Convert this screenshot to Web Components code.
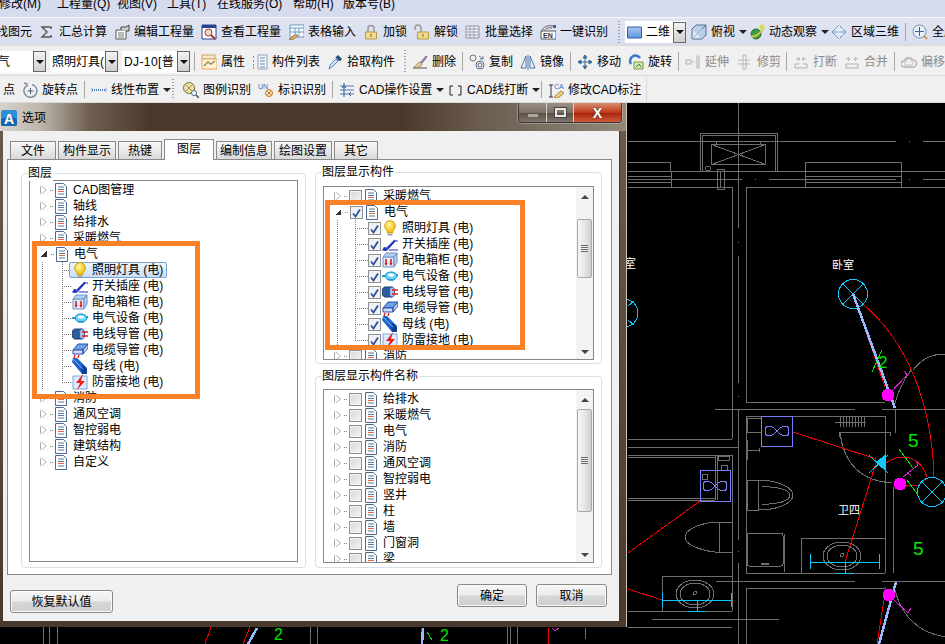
<!DOCTYPE html>
<html>
<head>
<meta charset="utf-8">
<title>选项</title>
<style>
  html, body { margin: 0; height: 100%; background: #000; overflow: hidden; }
  body { font: 12px/16px "Liberation Sans", "Noto Sans CJK SC", sans-serif; color: #000; }
</style>
</head>
<body>
<script>
const d = (s) => `fill="none" stroke="${s}"`;
const ICONS = {
  sigma: `<path d="M12 5V3H3l5 5-5 5h9v-2" ${d("#555")} stroke-width="1.4"/>`,
  edit: `<path d="M2 6h10v9H2z" fill="#fff" stroke="#555"/><path d="M4 9h6M4 11h6M4 13h6" stroke="#777"/><path d="M7 6V3h5l3-2v6h-3" fill="#ccc" stroke="#444"/>`,
  view: `<path d="M1 1h14v14H1z" fill="#fff" stroke="#27408b"/><path d="M1 1h14v3H1z" fill="#27408b"/><circle cx="7.500" cy="8.500" r="3.500" fill="#e8d8c8" stroke="#a33"/><path d="M10 11l4 4" stroke="#a33" stroke-width="2"/>`,
  table: `<path d="M2 1h14v12H2z" fill="#fff" stroke="#6b9bc9"/><path d="M2 4h14M7 4v9M11 4v9M2 8h14" stroke="#6b9bc9"/><path d="M1 15l7-5 2 2-6 4z" fill="#d9b070" stroke="#a57f40"/>`,
  lock: `<path d="M5 8V4.500a3 3 0 0 1 6 0V8" ${d("#999")} stroke-width="1.500"/><path d="M2.500 8h11v7h-11z" fill="#f2d98b" stroke="#b99a45"/><path d="M8 10v3" stroke="#86682a"/>`,
  unlock: `<path d="M1 6V4a3 3 0 0 1 6 0v4" ${d("#999")} stroke-width="1.500"/><path d="M3.500 8h11v7h-11z" fill="#f2d98b" stroke="#b99a45"/><path d="M9 10v3" stroke="#86682a"/>`,
  batch: `<path d="M1 2h13v12H1z" fill="#eef0f6" stroke="#8c93a8"/><path d="M1 5h13M1 8h13M1 11h13M5 2v12M9 2v12" stroke="#9aa0b4"/>`,
  en: `<path d="M1 7h15v8H1z" fill="#fff" stroke="#555"/><path d="M2 7a8 6 0 0 1 11-5" ${d("#666")}/><path d="M5 6a5 3 0 0 1 7-2" ${d("#666")}/><path d="M13 1h3v3h-3z" fill="#3a5fa8"/><text x="3" y="14" font-size="7" font-weight="700" font-family="Liberation Sans" fill="#333">EN</text>`,
  flat: `<defs><linearGradient id="fl" x1="0" y1="0" x2="0" y2="1"><stop offset="0" stop-color="#a9c8f2"/><stop offset="1" stop-color="#5f95e0"/></linearGradient></defs><path d="M.5 3h14v11H.5z" fill="url(#fl)" stroke="#2d5fae"/>`,
  cube: `<path d="M1 5h10v10H1z" fill="#dfeaf5" stroke="#4e6e93"/><path d="M1 5l4-4h10v10l-4 4M11 5l4-4" fill="#b9cfe6" stroke="#4e6e93"/><path d="M1 15l10-10" stroke="#9bb6d2"/>`,
  orbit: `<circle cx="7" cy="10" r="5" fill="#3f9a3f" stroke="#2a6b2a"/><path d="M2 12c4 2 10-3 13-9" ${d("#c7c94a")} stroke-width="2"/><circle cx="13" cy="3" r="2.500" fill="#d8dc5a"/>`,
  area: `<path d="M8 1l7 7-7 7-7-7z" fill="#cfe0f2" stroke="#6f93b8"/><path d="M4.500 4.500l7 7M11.500 4.500l-7 7M8 1v14" stroke="#fff"/><path d="M1 8h14" stroke="#8aa9c9"/>`,
  zoomall: `<circle cx="7.500" cy="7.500" r="6.500" fill="#e7eff8" stroke="#7d95ad"/><path d="M7.500 3v9M3 7.500h9" stroke="#35609a"/><path d="M12 12l3 3" stroke="#c99a45" stroke-width="2"/>`,
  attr: `<path d="M1 1h13v4H1z" fill="#f7ead0" stroke="#c9a267"/><path d="M1 5h15v10H1z" fill="#fdf2d8" stroke="#e6a75a"/><path d="M3 12l4-4 3 2 4-3" ${d("#9a8f5a")} stroke-width="1.500"/>`,
  list: `<path d="M1 3h2M1 7h2M1 11h2M1 14h2" ${d("#7a93b0")} stroke-width="2" stroke-dasharray="1 1"/><path d="M6 1h9v14H6z" fill="#f3f6fb" stroke="#8ca0b8"/><path d="M8 4h5M8 7h5M8 10h5M8 13h5" stroke="#6f86a6"/>`,
  pick: `<path d="M2 15l1-4 6-6 2 2-6 6z" fill="#cfe2f7" stroke="#5a85bd"/><path d="M9 3l4 4M11 1.500l3.500 3.500-2 2-3.500-3.500z" fill="#2c4a7a" stroke="#2c4a7a"/>`,
  erase: `<path d="M1 14h14" stroke="#888" stroke-width="1.500"/><path d="M2 13c3-1 3-4 6-5l2 2c-1 3-4 3-5 4z" fill="#e7c9a0" stroke="#a9825a"/><path d="M9 8l5-6 1 1-5 6z" fill="#b89ac6" stroke="#7d6290"/>`,
  copy: `<circle cx="4" cy="4" r="3" ${d("#777")}/><circle cx="11" cy="11" r="4" ${d("#5c6f8a")}/><circle cx="11" cy="11" r="2" ${d("#5c6f8a")}/><path d="M10 2l4 3M14 2v3h-3" ${d("#6b7d96")}/>`,
  mirror: `<path d="M1 14L6 2v12zM15 14L10 2v12z" fill="#eef3fb" stroke="#4e74a9"/><path d="M8 1v15" stroke="#4e74a9"/>`,
  move: `<path d="M8 1v14M1 8h14M8 1L6 4h4zM8 15l-2-3h4zM1 8l3-2v4zM15 8l-3-2v4z" fill="#3e6c9a" stroke="#3e6c9a"/>`,
  rotate: `<path d="M3 10A5 5 0 1 1 12 4" ${d("#3a79c9")} stroke-width="2.500"/><path d="M6 8h9v7H6z" fill="#cfe8b0" stroke="#7b9a4a"/><path d="M8 13l3-3 2 3" ${d("#3c8a3c")}/>`,
  extend: `<path d="M1 6h5v4H1zM12 2h2v12h-2z" ${d("#b0b0b0")}/><path d="M7 8h4" stroke="#b0b0b0" stroke-dasharray="1 1"/>`,
  trim: `<path d="M1 6h12M1 10h12M6 1h3v14H6z" ${d("#b8b8b8")}/>`,
  split: `<path d="M2 10h4M10 10h4M2 14h12M2 10v4M14 10v4" ${d("#b0b0b0")}/><path d="M3 5h4M9 5h4M5 3l2 2-2 2M11 3l-2 2 2 2" ${d("#b0b0b0")}/>`,
  join: `<path d="M2 10h12M2 14h12M2 10v4M14 10v4" ${d("#b0b0b0")}/><path d="M2 5h4M10 5h4M4 3l2 2-2 2M12 3l-2 2 2 2" ${d("#b0b0b0")}/>`,
  offset: `<path d="M3 13a3 3 0 0 1 0-6 5 5 0 0 1 9-1 3.500 3.500 0 0 1 0 7z" ${d("#b0b0b0")} stroke-width="1.300"/><path d="M5 11a1.500 1.500 0 0 1 0-3 3 3 0 0 1 6-.5 2 2 0 0 1 0 3.500z" ${d("#c4c4c4")}/>`,
  rotpt: `<path d="M4 4A6.500 6.500 0 1 0 10 2.500" ${d("#7a8ea8")} stroke-width="1.500"/><path d="M2 1l3 1v3" ${d("#7a8ea8")} stroke-width="1.500"/><path d="M8.500 6v6M5.500 9h6" stroke="#4a5a70"/>`,
  linear: `<path d="M1 8h14" stroke="#4f7fc2" stroke-width="2" stroke-dasharray="1 1"/><path d="M1 6v4M15 6v4" stroke="#7ca3d8"/>`,
  legend: `<circle cx="6" cy="6" r="5.500" fill="#f3e29a" stroke="#7a7458"/><path d="M2.500 2.500l7 7M9.500 2.500l-7 7" stroke="#8a8a70"/><circle cx="11" cy="11" r="2.500" fill="#fff" stroke="#4a6a8a"/><path d="M13 13l3 3" stroke="#4a4a4a" stroke-width="1.500"/>`,
  mark: `<text x="0" y="7" font-size="7" font-family="Liberation Sans" fill="#3a6fb5">UN</text><circle cx="11" cy="11" r="3.500" fill="#fbe6c4" stroke="#c9772a"/><path d="M9 9l4 4M13 9l-4 4" stroke="#c9772a"/>`,
  cadset: `<path d="M1 4h14M1 8h14M1 12h14" stroke="#4a78b8"/><path d="M5 1v14M3 6l2-2 2 2" ${d("#33558a")}/><path d="M12 10l-2 2 2 2" ${d("#33558a")}/>`,
  bracket: `<path d="M6 4H3v9h3M11 4h3v9h-3" ${d("#222")}/>`,
  cadmod: `<path d="M3 3v12M1 3h4M1 15h4" ${d("#333")}/><text x="6" y="7" font-size="7" font-family="Liberation Sans" fill="#2f6fc0">CAD</text><path d="M6 15l7-6 3 2-6 5z" fill="#f0cf80" stroke="#a88a45"/>`,
  bulb: `<defs><radialGradient id="bu" cx=".4" cy=".35" r=".7"><stop offset="0" stop-color="#fff6a0"/><stop offset="1" stop-color="#f4b800"/></radialGradient></defs><path d="M8 .5a5.500 5.500 0 0 0-3 10v2h6v-2a5.500 5.500 0 0 0-3-10z" fill="url(#bu)" stroke="#d6a400"/><path d="M5.500 13.500h5v2h-5z" fill="#9a9a9a"/>`,
  switch: `<path d="M0 14h5l8-9h3M5 12l8-8M7 14h9" ${d("#2233bb")} stroke-width="1.200"/><circle cx="3" cy="13" r="2" fill="#2233bb"/>`,
  box: `<path d="M1 5h11v10H1z" fill="#dfeafa" stroke="#6f93c8"/><path d="M1 5l3-4h11l-3 4zM12 5l3-4v9l-3 5z" fill="#b7d0f2" stroke="#6f93c8"/><path d="M4 7v5M9 7v5" stroke="#d01818" stroke-width="1.500"/><path d="M2.500 11L4 14l1.500-3M7.500 11L9 14l1.500-3" fill="#d01818"/>`,
  device: `<path d="M0 8h4M12 7h4" stroke="#1aa3e0" stroke-width="2"/><ellipse cx="9" cy="8" rx="6" ry="4" fill="#6fd3f7" stroke="#0a87c9"/><ellipse cx="9" cy="7" rx="3" ry="1.500" fill="#fff"/><path d="M6 12h6" stroke="#0a87c9"/>`,
  conduit: `<path d="M3 3h7v10H3a3 5 0 0 1 0-10z" fill="#2d5d9f" stroke="#1e3f70"/><ellipse cx="10" cy="8" rx="2.500" ry="5" fill="#a9c6e8" stroke="#2d5d9f"/><path d="M10 6h6M10 10h6" stroke="#e01818" stroke-width="1.300"/>`,
  cable: `<path d="M1 8l5-6h10l-5 6z" fill="#6fa3e8" stroke="#2451a6"/><path d="M1 8h10v4H1zM11 8l5-6v4l-5 6z" fill="#cfe0f8" stroke="#2451a6"/><path d="M3 13l-1 3M7 13l-1 3" stroke="#e01818" stroke-width="1.300"/>`,
  bus: `<path d="M1 0h4l10 10v6h-5L0 4z" fill="#1e63c9"/><path d="M9 9l2-2 4 4v5h-5z" fill="#0c3f96"/><path d="M1 1l10 10" stroke="#7fb2f0"/>`,
  bolt: `<path d="M1 2h14v13H1z" fill="#dcebfb" stroke="#7fa8d8"/><path d="M11 0L4 9h4l-3 7 8-9H9z" fill="#ee1c1c"/>`
};
const svgIcon = (name, size = 16) =>
  `<svg width="${size}" height="${size}" viewBox="0 0 16 16" style="flex:none;display:block">${ICONS[name] || ""}</svg>`;

class MenuBar extends HTMLElement {
  connectedCallback() {
    const root = this.shadowRoot || this.attachShadow({ mode: "open" });
    root.innerHTML = `
      <style>
        :host { display: flex; flex: none; height: 17px; background: #d6dbee; border-bottom: 1px solid #f6f7fb; overflow: hidden; }
        div { display: flex; margin: 0 0 0 -1px; line-height: 9px; color: #000; }
        ::slotted(span) { flex: none; white-space: nowrap; }
      </style>
      <div><slot></slot></div>`;
  }
}
class ToolBar extends HTMLElement {
  connectedCallback() {
    const root = this.shadowRoot || this.attachShadow({ mode: "open" });
    const h = this.getAttribute("h") || 29;
    const pad = this.getAttribute("pad") || 0;
    root.innerHTML = `
      <style>
        :host { display: flex; flex: none; align-items: center; height: ${h}px; box-sizing: border-box; padding-top: ${pad}px;
                background: var(--bar, #f0f0f0); border-bottom: 1px solid #d9d9d9; overflow: hidden; }
      </style>
      <slot></slot>`;
  }
}
class TbBtn extends HTMLElement {
  connectedCallback() {
    const root = this.shadowRoot || this.attachShadow({ mode: "open" });
    const icon = this.getAttribute("icon");
    this.style.width = this.getAttribute("w") + "px";
    root.innerHTML = `
      <style>
        :host { display: flex; flex: none; align-items: center; gap: 4px; white-space: nowrap; color: #000; }
        :host([off]) { color: #8c8c8c; }
        .drop { width: 0; height: 0; margin-left: 0; border: 4px solid transparent; border-top: 4px solid #222; border-bottom: 0; }
      </style>
      ${icon ? svgIcon(icon) : ""}<slot></slot>${this.hasAttribute("drop") ? '<i class="drop"></i>' : ""}`;
  }
}
class TbSep extends HTMLElement {
  connectedCallback() {
    const root = this.shadowRoot || this.attachShadow({ mode: "open" });
    const w = this.getAttribute("w"), at = this.getAttribute("at");
    const grip = this.hasAttribute("grip");
    root.innerHTML = `
      <style>
        :host { display: block; flex: none; align-self: stretch; width: ${w}px; box-sizing: border-box; padding: ${grip ? "2px" : "4px"} 0 ${grip ? "2px" : "4px"} ${at}px; }
        i { display: block; height: 100%; width: 1px; background: #a6a6a6; }
        i.g { width: 2px; background: repeating-linear-gradient(to bottom, #9aa0ae 0 1px, transparent 1px 3px); }
      </style>
      <i class="${grip ? "g" : ""}"></i>`;
  }
}
class TbCombo extends HTMLElement {
  connectedCallback() {
    const root = this.shadowRoot || this.attachShadow({ mode: "open" });
    this.style.width = this.getAttribute("w") + "px";
    root.innerHTML = `
      <style>
        :host { display: flex; flex: none; height: 22px; background: #fff; align-items: center; white-space: nowrap; overflow: hidden; }
        .t { flex: 1; min-width: 0; overflow: hidden; display: flex; align-items: center; gap: 3px; padding-left: 2px; }
        .b { flex: none; box-sizing: border-box; width: 13px; height: 21px; border: 1px solid #666; background: linear-gradient(#f2f2f2, #cfcfcf); display: flex; align-items: center; justify-content: center; }
        .b i { width: 0; height: 0; border: 4px solid transparent; border-top: 4px solid #111; border-bottom: 0; }
      </style>
      <div class="t"><slot></slot></div><div class="b"><i></i></div>`;
  }
}
class CadCanvas extends HTMLElement {
  connectedCallback() {
    const root = this.shadowRoot || this.attachShadow({ mode: "open" });
    root.innerHTML = `
      <style>
        :host { display: block; flex: 1; min-height: 0; background: #000; overflow: hidden; }
        svg { display: block; }
        text { font-family: "Liberation Sans", "Noto Sans CJK SC", sans-serif; }
      </style>
      <svg width="945" height="541" viewBox="0 103 945 541" shape-rendering="crispEdges" fill="none">
        <path stroke="#6e6e6e" d="M738.500 103V228M738.500 242v1M738.500 256V383M738.500 396v1M738.500 410V540M738.500 551v1M738.500 563V644
          M628 141.500H896M909 141.500h1M923 141.500H945
          M700.500 171V133.500H777V171M702.500 171V135.500H775V171M711.500 144.500H765.500V164.500H711.500ZM711.500 144.500L765.500 164.500M765.500 144.500L711.500 164.500M716.500 144V141.500H760.500V144
          M628 171.500H945M628 176.500H672M628 179.500H742M755 179.500h1M769 179.500H896M909 179.500h1M923 179.500H945M628 182.500H672M805 176.500H902M805 182.500H902
          M628 162.500H670.500V171M671.500 171V187M628 187.500H732M746 187.500H945M805.500 187V162.500H901.500V187
          M717.500 169.500H724.500V189.500H717.500ZM720 172V187
          M732.500 187V439M628 439.500H732M628 447.500H738M746.500 187V402.500H885
          M715 409.500H855M882 409.500H945M746.500 416V573M746.500 416.500H885M885.500 416V573M893.500 487V573M895.500 409V433M746 573.500H885
          M716 581.500H855M882 581.500H945M746.500 588V644M746 588.500H885M885.500 588V600
          M732.500 455V611M628 455.500H732M628 457.500H715M628 500.500H715M628 498.500H715M715.500 456V500M717.500 456V500M718.500 456.500H729.500V460.500H718.500ZM721.500 465.500H727.500V470.500H721.500Z
          M715 522C696 524 685 531 685 537C685 544 698 550 715 552M719.500 522V552M715 522H732M715 552H732
          M747.500 480H758.500V510H747.500ZM758 480C778 480 793 488 793 495C793 503 778 510 758 510M762 487C776 486 790 490 790 495C790 501 776 505 762 504
          M749 533.500H781Q783 533.500 783 536V564Q783 566 781 566H749Q747 566 747 564V536Q747 533.500 749 533.500ZM784.500 534V572M761 563.500H769M761 564.500H769
          M801.500 538V573M801 538.500H885M662.500 576V611M662 576.500H732M628 611.500H732M652 619.500H779M628 627.500H732
          M839 432.500H890V436M839.500 432V437M747.500 418.500H761V432.500H747.500ZM747 440V460M747 450H759M759 448V452
          M840 417V427M843 417V427M846 417V427M849 417V427M852 417V427M855 417V427M858 417V427M861 417V427M864 417V427M835 422H866
          M43.500 627V644M49.500 627V644M57.500 627V644M310.500 627V644M317.500 627V644M507.500 627V644M510.500 627V644M517.500 627V644M585.500 628V639"/>
        <path stroke="#6e6e6e" d="M840 433Q846 480 892 483M911 370Q900 385 895 403M913 370Q925 354 945 354M895 590Q905 630 945 637"/>
        <circle cx="708" cy="168.500" r="2.500" stroke="#6e6e6e"/><circle cx="705" cy="477" r="3" stroke="#6e6e6e"/>
        <g stroke="#6e6e6e">
          <ellipse cx="842" cy="556" rx="19" ry="14"/><ellipse cx="842" cy="556" rx="15" ry="11"/><circle cx="842" cy="555" r="1.500"/>
          <ellipse cx="695" cy="594" rx="19" ry="14"/><ellipse cx="695" cy="594" rx="15" ry="11"/><circle cx="695" cy="593" r="1.500"/>
        </g>
        <path stroke="#7c7cff" d="M700.500 470.500H730.500V501.500H700.500ZM761.500 416.500H792.500V446.500H761.500Z"/>
        <path stroke="#7c7cff" d="M715 486C708 478 703 481 703 486C703 491 708 494 715 486C722 478 727 481 727 486C727 491 722 494 715 486M777 431C770 423 765 426 765 431C765 436 770 439 777 431C784 423 789 426 789 431C789 436 784 439 777 431"/>
        <path stroke="#ee0000" d="M628 553L700 501M793 432L876 459M876 463L845 562M628 589L662 600M853 294L885 387M886 587L877 644M864 305C905 340 932 400 934 477M886 463C905 450 922 460 927 477M900 485H917M211 627L205 644M250 627L243 644M421 628V644M548 628L549 644"/>
        <path stroke="#0fc8ff" d="M810 562.500H879M810.500 554V569M879.500 554V569M845.500 562V573M837 573.500H854M662 600.500H731M662.500 593V607M731.500 593V607M697.500 600V611M688 611.500H705"/>
        <path stroke="#0fc8ff" d="M869 455L888 473M869 473L888 455"/>
        <path fill="#0fc8ff" d="M886 454L876 462L886 471Z"/>
        <g stroke="#0fc8ff">
          <circle cx="853" cy="294" r="14.500"/><path d="M843 284L863 304M863 284L843 304"/>
          <circle cx="932" cy="492" r="14.500"/><path d="M922 482L942 502M942 482L922 502"/>
          <circle cx="624" cy="313" r="14"/><path d="M628 306L634 301M628 320L634 325"/>
        </g>
        <path stroke="#9bb9ff" stroke-width="2.500" d="M853 294L895 408M896 582L879 644M257 628L248 644M423 628L422 644"/>
        <g fill="#ff00ff"><circle cx="888" cy="395" r="6.500"/><circle cx="900" cy="484" r="6.500"/><circle cx="889" cy="595" r="6.500"/></g>
        <path stroke="#dd22dd" d="M890 393L907 375M903 477L918 465L916 461M907 472L911 476M894 600L908 613L911 608M904 371L908 376M552 628L555 631L559 628"/>
        <path stroke="#00e600" d="M872 372L882 350M899 449L913 468M907 480L918 495M427 632L432 640"/>
        <g fill="#00e600" shape-rendering="auto">
          <text x="883" y="368" font-size="16" text-anchor="middle">2</text>
          <text x="908" y="447" font-size="19">5</text><text x="913" y="555" font-size="19">5</text>
          <text x="274" y="640" font-size="16">2</text><text x="440" y="641" font-size="16">2</text>
        </g>
        <g fill="#fff" shape-rendering="auto">
          <text x="832" y="269" font-size="11">卧室</text>
          <text x="624" y="268" font-size="12">室</text>
          <text x="838" y="514" font-size="11">卫四</text>
        </g>
      </svg>`;
  }
}
class OptDialog extends HTMLElement {
  connectedCallback() {
    const root = this.shadowRoot || this.attachShadow({ mode: "open" });
    root.innerHTML = `
      <style>
        :host { position: absolute; left: 0; top: 103px; width: 627px; height: 524px; box-sizing: border-box; display: flex; flex-direction: column;
                background: linear-gradient(#6a5b4c, #4a3a2d 96%); border-right: 1px solid #cfc8bd; }
        .title { flex: none; height: 27px; display: flex; align-items: center; gap: 5px; padding: 1px 0 0 1px;
                 background: linear-gradient(90deg, #d6d4cd 0, #bdb7ad 40px, #6f5f50 90px, #4a392b 150px, #4a392b 400px, #6a5c4e 480px, #92897b 100%); }
        .title b { font-weight: normal; }
        .ctrl { position: absolute; right: 4px; top: 0; height: 19px; display: flex; border: 1px solid #3c3a38; border-top: 0; border-radius: 0 0 4px 4px; overflow: hidden; box-shadow: 0 0 0 1px #d8d4cc66; }
        .ctrl i { display: flex; align-items: center; justify-content: center; height: 100%; box-sizing: border-box; border-right: 1px solid #d8d4cc; background: linear-gradient(#9a9086, #7a7066 50%, #5a5046 55%, #80766c); }
        .min { width: 28px; } .min::after { content: ""; width: 10px; height: 3px; background: #aaa69f; margin-top: 5px; }
        .res { width: 27px; } .res::after { content: ""; width: 7px; height: 5px; border: 2px solid #e8e8e8; box-shadow: 0 0 0 1px #444; }
        .ctrl i.cls { width: 47px; border: 0; color: #fff; font: 700 14px/1 "Liberation Sans", sans-serif; text-shadow: 0 0 2px #333; background: linear-gradient(#d99070, #c23a1c 50%, #a82610 55%, #d05a38); }
        .body { flex: none; height: 490px; margin: 0 6px 0 3px; background: #f0f0f0; border: 1px solid #3c3a38; border-width: 0 1px 0 0; display: flex; flex-direction: column; box-sizing: border-box; }
      </style>
      <div class="title">${this.appIcon()}<b>${this.getAttribute("caption")}</b></div>
      <div class="ctrl"><i class="min"></i><i class="res"></i><i class="cls">X</i></div>
      <div class="body"><slot></slot></div>`;
  }
  appIcon() {
    return `<svg width="16" height="16" viewBox="0 0 16 16" style="flex:none"><rect width="16" height="16" rx="2" fill="#2a8fd8"/><path d="M0 9Q8 5 16 9V14a2 2 0 0 1-2 2H2a2 2 0 0 1-2-2z" fill="#1566ad"/><text x="8" y="13.500" text-anchor="middle" font-size="14" font-weight="700" font-family="Liberation Sans" fill="#fff">A</text></svg>`;
  }
}
class TabStrip extends HTMLElement {
  connectedCallback() {
    const root = this.shadowRoot || this.attachShadow({ mode: "open" });
    root.innerHTML = `
      <style>
        :host { display: flex; flex: none; align-items: flex-end; height: 20px; margin: 8px 0 0 4px; padding-left: 3px; gap: 2px; position: relative; z-index: 1; }
      </style>
      <slot></slot>`;
  }
}
class OptTab extends HTMLElement {
  connectedCallback() {
    const root = this.shadowRoot || this.attachShadow({ mode: "open" });
    this.style.width = this.getAttribute("w") + "px";
    root.innerHTML = `
      <style>
        :host { display: flex; flex: none; box-sizing: border-box; height: 18px; align-items: center; justify-content: center; white-space: nowrap;
                border: 1px solid #8a8a8a; border-bottom: 0; background: linear-gradient(#f8f8f8, #e9e9e9 50%, #d8d8d8); }
        :host([active]) { height: 21px; margin-bottom: -1px; background: #fff; align-items: flex-start; padding-top: 1px; }
      </style>
      <slot></slot>`;
  }
}
class TabPane extends HTMLElement {
  connectedCallback() {
    const root = this.shadowRoot || this.attachShadow({ mode: "open" });
    root.innerHTML = `
      <style>
        :host { display: flex; flex: none; box-sizing: border-box; width: 605px; height: 416px; margin-left: 4px; padding: 13px 10px 6px 13px; gap: 9px; background: #fff; border: 1px solid #8a8a8a; }
      </style>
      <slot></slot>`;
  }
}
class GroupBox extends HTMLElement {
  connectedCallback() {
    const root = this.shadowRoot || this.attachShadow({ mode: "open" });
    this.style.width = this.getAttribute("w") + "px";
    this.style.height = this.getAttribute("h") + "px";
    root.innerHTML = `
      <style>
        :host { display: flex; flex: none; box-sizing: border-box; position: relative; border: 1px solid #d6e0e6; border-radius: 4px; padding: var(--pad); }
        .cap { position: absolute; left: 6px; top: -9px; background: #fff; padding: 0 1px 0 0; line-height: 16px; white-space: nowrap; }
      </style>
      <span class="cap">${this.getAttribute("caption")}</span><slot></slot>`;
  }
}
class GroupColumn extends HTMLElement {
  connectedCallback() {
    const root = this.shadowRoot || this.attachShadow({ mode: "open" });
    root.innerHTML = `
      <style>:host { display: flex; flex-direction: column; gap: 12px; flex: none; margin-top: -1px; }</style>
      <slot></slot>`;
  }
}
class ScrollBar extends HTMLElement {
  connectedCallback() {
    const root = this.shadowRoot || this.attachShadow({ mode: "open" });
    const top = +this.getAttribute("top"), h = +this.getAttribute("size");
    root.innerHTML = `
      <style>
        :host { display: flex; flex-direction: column; flex: none; width: 17px; background: #f3f3f3; }
        .a { flex: none; height: 17px; display: flex; align-items: center; justify-content: center; padding-top: 3px; box-sizing: border-box; }
        .a i { width: 0; height: 0; border: 4px solid transparent; }
        .up i { border-bottom: 4px solid #444; border-top: 0; }
        .dn i { border-top: 4px solid #444; border-bottom: 0; }
        .sp { flex: 1; }
        .th { flex: none; box-sizing: border-box; width: 15px; margin: ${top - 17}px 1px 0; height: ${h}px; border: 1px solid #a9a9a9; border-radius: 2px;
              background: linear-gradient(90deg, #f6f6f6, #e6e6e6 50%, #cfcfcf); display: flex; align-items: center; justify-content: center; }
        .th i { width: 7px; height: 7px; background: repeating-linear-gradient(to bottom, #666 0 1px, #f4f4f4 1px 2px); }
      </style>
      <div class="a up"><i></i></div><div class="th"><i></i></div><div class="sp"></div><div class="a dn"><i></i></div>`;
  }
}
class TreeView extends HTMLElement {
  connectedCallback() {
    const root = this.shadowRoot || this.attachShadow({ mode: "open" });
    const bar = this.hasAttribute("top")
      ? `<scroll-bar top="${this.getAttribute("top")}" size="${this.getAttribute("size")}"></scroll-bar>` : "";
    root.innerHTML = `
      <style>
        :host { display: flex; flex: 1; min-width: 0; box-sizing: border-box; border: 1px solid #85878f; background: #fff; overflow: hidden; }
        .rows { flex: 1; min-width: 0; padding-top: 1px; overflow: hidden; }
      </style>
      <div class="rows"><slot></slot></div>${bar}`;
  }
}
class TreeRow extends HTMLElement {
  connectedCallback() {
    const root = this.shadowRoot || this.attachShadow({ mode: "open" });
    const level = +this.getAttribute("level") || 0;
    const check = this.getAttribute("check");
    const open = this.hasAttribute("open");
    const box = check
      ? `<i class="chk ${check}">${check === "on" ? '<svg width="11" height="11" viewBox="0 0 11 11"><path d="M2 5.500l2.500 3L9 1.500" fill="none" stroke="#33509f" stroke-width="1.800"/></svg>' : ""}</i>`
      : "";
    const icon = this.getAttribute("icon") || "doc";
    const doc = `<svg class="doc" width="12" height="15" viewBox="0 0 12 15"><path d="M.5.500h8l3 3v11H.5z" fill="#fdfdfe" stroke="#4a6a94"/><path d="M3 4h6M3 6.500h6M3 11h6" stroke="#5c78a0"/><path d="M3 8.500h6" stroke="${icon === "doc2" ? "#5c78a0" : "#ea6a3a"}"/></svg>`;
    const head = level
      ? `<i class="lead ${this.hasAttribute("last") ? "last" : ""}"></i>${box}`
      : `<i class="pad"></i><i class="arr ${open ? "open" : ""}"></i><i class="conn"></i>${box}`;
    const body = level
      ? `<span class="item ${this.hasAttribute("selected") ? "sel" : ""}">${svgIcon(icon)}<span class="lbl"><slot></slot></span></span>`
      : `<span class="item top ${check ? "c" : ""}">${doc}<span class="lbl"><slot></slot></span></span>`;
    root.innerHTML = `
      <style>
        :host { display: flex; height: 16px; align-items: center; white-space: nowrap; }
        i { display: block; flex: none; }
        .pad { width: 11px; }
        .arr { width: 0; height: 0; border-left: 5px solid #fff; border-top: 4.500px solid transparent; border-bottom: 4.500px solid transparent; position: relative; filter: drop-shadow(-1px 0 0 #a6a6a6) drop-shadow(1px 0 0 #a6a6a6); margin: 0 1px 0 0; }
        .arr.open { width: 6px; height: 6px; border: 0; filter: none; background: linear-gradient(135deg, transparent 50%, #333 50%); }
        .conn { width: 8px; height: 1px; background: repeating-linear-gradient(90deg, transparent 0 3px, #888 3px 4px, transparent 4px 5px, #888 5px 6px, transparent 6px 8px); }
        .chk { box-sizing: border-box; width: 13px; height: 13px; border: 1px solid #8e8f8f; background: linear-gradient(135deg, #d8d8d8, #f4f4f4); box-shadow: inset 0 0 0 1px #f2f2f2; }
        .chk.on { background: #eef1f6; }
        .lead { width: var(--lead); height: 16px;
          background-image: repeating-linear-gradient(to bottom, #777 0 1px, transparent 1px 2px), repeating-linear-gradient(to bottom, #777 0 1px, transparent 1px 2px), repeating-linear-gradient(90deg, #777 0 1px, transparent 1px 2px);
          background-repeat: no-repeat;
          background-size: 1px 16px, 1px 16px, calc(var(--lead) - var(--g2)) 1px;
          background-position: var(--g1) 0, var(--g2) 0, var(--g2) 8px; }
        .lead.last { background-size: 1px 16px, 1px 8px, calc(var(--lead) - var(--g2)) 1px; }
        .item { display: flex; align-items: center; flex: none; gap: var(--icon-gap, 4px); height: 16px; margin-left: var(--item-ml, 0); }
        .item svg { flex: none; }
        .item.top { gap: 6px; margin-left: 0; }
        .item.top.c { margin-left: 3px; }
        .item.sel { box-sizing: border-box; height: 16px; margin-left: -3px; padding: 0 3px 0 2px; border: 1px solid #7da2ce; border-radius: 2px; background: linear-gradient(#edf5fd, #c9def5); }
      </style>
      ${head}${body}`;
  }
}
class PushBtn extends HTMLElement {
  connectedCallback() {
    const root = this.shadowRoot || this.attachShadow({ mode: "open" });
    this.style.width = this.getAttribute("w") + "px";
    root.innerHTML = `
      <style>
        :host { display: flex; flex: none; box-sizing: border-box; height: 23px; align-items: center; justify-content: center; border: 1px solid #8a8a8a; border-radius: 3px;
                background: linear-gradient(#f6f6f6, #ececec 48%, #d6d6d6 52%, #d0d0d0); box-shadow: inset 0 0 0 1px #fbfbfb; }
      </style>
      <slot></slot>`;
  }
}
class DlgFooter extends HTMLElement {
  connectedCallback() {
    const root = this.shadowRoot || this.attachShadow({ mode: "open" });
    root.innerHTML = `
      <style>
        :host { display: flex; flex: 1; align-items: flex-start; padding: 9px 12px 0 7px; gap: 9px; }
        .sp { flex: 1; }
      </style>
      <slot name="left"></slot><div class="sp"></div><slot></slot>`;
  }
}
class HiBox extends HTMLElement {
  connectedCallback() {
    const root = this.shadowRoot || this.attachShadow({ mode: "open" });
    root.innerHTML = `
      <style>
        :host { position: absolute; box-sizing: border-box; border: 5px solid #fb8127; pointer-events: none; z-index: 5; }
      </style>`;
  }
}
class AppShell extends HTMLElement {
  connectedCallback() {
    const root = this.shadowRoot || this.attachShadow({ mode: "open" });
    root.innerHTML = `
      <style>
        :host { display: flex; flex-direction: column; position: relative; width: 945px; height: 644px; overflow: hidden; background: #000; }
      </style>
      <slot></slot>`;
  }
}
customElements.define("menu-bar", MenuBar);
customElements.define("tool-bar", ToolBar);
customElements.define("tb-btn", TbBtn);
customElements.define("tb-sep", TbSep);
customElements.define("tb-combo", TbCombo);
customElements.define("cad-canvas", CadCanvas);
customElements.define("opt-dialog", OptDialog);
customElements.define("tab-strip", TabStrip);
customElements.define("opt-tab", OptTab);
customElements.define("tab-pane", TabPane);
customElements.define("group-box", GroupBox);
customElements.define("group-column", GroupColumn);
customElements.define("scroll-bar", ScrollBar);
customElements.define("tree-view", TreeView);
customElements.define("tree-row", TreeRow);
customElements.define("push-btn", PushBtn);
customElements.define("dlg-footer", DlgFooter);
customElements.define("hi-box", HiBox);
customElements.define("app-shell", AppShell);

const elecRows = (check) => [
  ["bulb", "照明灯具 (电)"], ["switch", "开关插座 (电)"], ["box", "配电箱柜 (电)"], ["device", "电气设备 (电)"],
  ["conduit", "电线导管 (电)"], ["cable", "电缆导管 (电)"], ["bus", "母线 (电)"], ["bolt", "防雷接地 (电)"]
].map(([icon, text], i, all) =>
  `<tree-row level="1" icon="${icon}" ${check ? 'check="on"' : ""} ${i === all.length - 1 ? "last" : ""} ${!check && i === 0 ? "selected" : ""}>${text}</tree-row>`
).join("");
const topRow = (text, icon, check) => `<tree-row icon="${icon}" ${check ? `check="${check}"` : ""}>${text}</tree-row>`;

document.body.innerHTML = `
<app-shell>
  <menu-bar>
    <span style="width:58px">修改(M)</span><span style="width:60px">工程量(Q)</span><span style="width:50px">视图(V)</span><span style="width:50px">工具(T)</span><span style="width:76px">在线服务(O)</span><span style="width:50px">帮助(H)</span><span>版本号(B)</span>
  </menu-bar>
  <tool-bar h="28" pad="1" style="--bar:linear-gradient(#e0e4f2,#d9deef)">
    <tb-btn w="43" style="margin-left:-4px">找图元</tb-btn>
    <tb-btn w="75" icon="sigma">汇总计算</tb-btn>
    <tb-btn w="87" icon="edit">编辑工程量</tb-btn>
    <tb-btn w="87" icon="view">查看工程量</tb-btn>
    <tb-btn w="75" icon="table">表格输入</tb-btn>
    <tb-btn w="51" icon="lock">加锁</tb-btn>
    <tb-btn w="51" icon="unlock">解锁</tb-btn>
    <tb-btn w="75" icon="batch">批量选择</tb-btn>
    <tb-btn w="72" icon="en">一键识别</tb-btn>
    <tb-sep w="13" at="6" grip></tb-sep>
    <tb-combo w="61"><svg width="16" height="16" viewBox="0 0 16 16" style="flex:none">${ICONS.flat}</svg>二维</tb-combo>
    <tb-btn w="58" icon="cube" drop style="margin-left:5px">俯视</tb-btn>
    <tb-btn w="82" icon="orbit" drop>动态观察</tb-btn>
    <tb-btn w="74" icon="area">区域三维</tb-btn>
    <tb-sep w="7" at="0"></tb-sep>
    <tb-btn w="40" icon="zoomall">全屏</tb-btn>
  </tool-bar>
  <tool-bar h="30" pad="2">
    <tb-combo w="46"><span style="margin-left:-4px">气</span></tb-combo>
    <tb-combo w="68" style="margin-left:4px">照明灯具(电)</tb-combo>
    <tb-combo w="68" style="margin-left:4px"><span style="letter-spacing:.4px">DJ-10[普</span></tb-combo>
    <tb-sep w="11" at="4"></tb-sep>
    <tb-btn w="51" icon="attr">属性</tb-btn>
    <tb-btn w="75" icon="list">构件列表</tb-btn>
    <tb-btn w="73" icon="pick">拾取构件</tb-btn>
    <tb-sep w="12" at="4" grip></tb-sep>
    <tb-btn w="47" icon="erase">删除</tb-btn>
    <tb-sep w="10" at="3"></tb-sep>
    <tb-btn w="51" icon="copy">复制</tb-btn>
    <tb-btn w="47" icon="mirror">镜像</tb-btn>
    <tb-sep w="10" at="3"></tb-sep>
    <tb-btn w="51" icon="move">移动</tb-btn>
    <tb-btn w="47" icon="rotate">旋转</tb-btn>
    <tb-sep w="10" at="3"></tb-sep>
    <tb-btn w="52" icon="extend" off>延伸</tb-btn>
    <tb-btn w="46" icon="trim" off>修剪</tb-btn>
    <tb-sep w="10" at="3"></tb-sep>
    <tb-btn w="51" icon="split" off>打断</tb-btn>
    <tb-btn w="47" icon="join" off>合并</tb-btn>
    <tb-sep w="10" at="3"></tb-sep>
    <tb-btn w="60" icon="offset" off>偏移</tb-btn>
  </tool-bar>
  <tool-bar h="27" pad="1">
    <tb-btn w="19" style="padding-left:3px">点</tb-btn>
    <tb-btn w="59" icon="rotpt">旋转点</tb-btn>
    <tb-sep w="10" at="3"></tb-sep>
    <tb-btn w="79" icon="linear" drop>线性布置</tb-btn>
    <tb-sep w="13" at="2" grip></tb-sep>
    <tb-btn w="75" icon="legend">图例识别</tb-btn>
    <tb-btn w="71" icon="mark">标识识别</tb-btn>
    <tb-sep w="10" at="3"></tb-sep>
    <tb-btn w="108" icon="cadset" drop>CAD操作设置</tb-btn>
    <tb-btn w="91" icon="bracket" drop>CAD线打断</tb-btn>
    <tb-sep w="10" at="3"></tb-sep>
    <tb-btn w="98" icon="cadmod" style="align-self:stretch;border-right:1px solid #d9d9d9">修改CAD标注</tb-btn>
  </tool-bar>
  <cad-canvas></cad-canvas>
  <opt-dialog caption="选项">
    <tab-strip>
      <opt-tab w="46">文件</opt-tab><opt-tab w="58">构件显示</opt-tab><opt-tab w="44">热键</opt-tab><opt-tab w="50" active>图层</opt-tab><opt-tab w="56">编制信息</opt-tab><opt-tab w="58">绘图设置</opt-tab><opt-tab w="44">其它</opt-tab>
    </tab-strip>
    <tab-pane>
      <group-box caption="图层" w="285" h="395" style="--pad:6px 7px 5px 7px">
        <tree-view style="--lead:42px;--g1:12px;--g2:32px;--icon-gap:4px;--item-ml:0">
          ${topRow("CAD图管理", "doc")}${topRow("轴线", "doc2")}${topRow("给排水", "doc")}${topRow("采暖燃气", "doc")}
          <tree-row open icon="doc">电气</tree-row>${elecRows(false)}
          ${topRow("消防", "doc")}${topRow("通风空调", "doc2")}${topRow("智控弱电", "doc")}${topRow("建筑结构", "doc2")}${topRow("自定义", "doc")}
        </tree-view>
      </group-box>
      <group-column>
        <group-box caption="图层显示构件" w="287" h="192" style="--pad:13px 7px 3px 7px">
          <tree-view top="32" size="59" style="--lead:44px;--g1:13px;--g2:31px;--icon-gap:4px;--item-ml:1px">
            ${topRow("采暖燃气", "doc", "off")}
            <tree-row open icon="doc" check="on">电气</tree-row>${elecRows(true)}
            ${topRow("消防", "doc", "off")}
          </tree-view>
        </group-box>
        <group-box caption="图层显示构件名称" w="287" h="192" style="--pad:12px 7px 4px 7px">
          <tree-view top="19" size="103">
            ${[["给排水","doc"],["采暖燃气","doc"],["电气","doc"],["消防","doc"],["通风空调","doc2"],["智控弱电","doc"],["竖井","doc"],["柱","doc"],["墙","doc"],["门窗洞","doc2"],["梁","doc"]].map(([t,i]) => topRow(t, i, "off")).join("")}
          </tree-view>
        </group-box>
      </group-column>
    </tab-pane>
    <dlg-footer>
      <push-btn slot="left" w="103" style="margin-top:6px">恢复默认值</push-btn>
      <push-btn w="70">确定</push-btn>
      <push-btn w="71">取消</push-btn>
    </dlg-footer>
  </opt-dialog>
  <hi-box style="left:32px;top:241px;width:168px;height:158px"></hi-box>
  <hi-box style="left:325px;top:200px;width:200px;height:150px"></hi-box>
</app-shell>`;
</script>
</body>
</html>
